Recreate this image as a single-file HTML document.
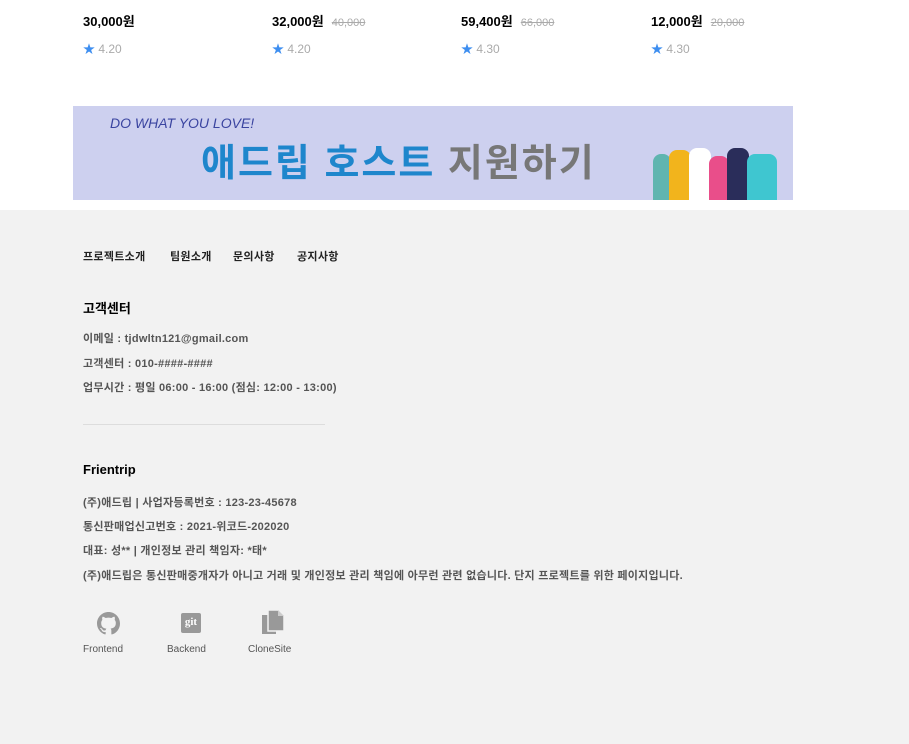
<!DOCTYPE html>
<html><head><meta charset="utf-8"><style>
*{margin:0;padding:0;box-sizing:border-box}
body{width:909px;height:744px;background:#f2f2f2;font-family:"Liberation Sans","Noto Sans CJK KR",sans-serif;position:relative;overflow:hidden}
.top{position:absolute;left:0;top:0;width:909px;height:210px;background:#fff}
.abs{position:absolute;white-space:nowrap}
.price{font-size:13px;font-weight:bold;color:#000}
.old{font-size:11px;color:#aaa;text-decoration:line-through;font-weight:normal;margin-left:8px}
.rate{font-size:12px;color:#aaa}
.star{color:#3d8ef0;font-size:12px}
.banner{position:absolute;left:73px;top:106px;width:720px;height:94px;background:#cdd0ef;overflow:hidden}
.f{font-size:11px;color:#555;font-weight:bold;letter-spacing:0.25px}
.h{font-size:13px;font-weight:bold;color:#000}
.nav{font-size:11px;color:#222;font-weight:bold;letter-spacing:0.3px}
.lbl{font-size:10px;color:#555}
</style></head><body>
<div class="top"></div>
<div class="abs price" style="left:83px;top:11px">30,000원</div>
<div class="abs price" style="left:272px;top:11px">32,000원<span class="old">40,000</span></div>
<div class="abs price" style="left:461px;top:11px">59,400원<span class="old">66,000</span></div>
<div class="abs price" style="left:651px;top:11px">12,000원<span class="old">20,000</span></div>
<div class="abs rate" style="left:83px;top:40px"><span class="star">★</span> 4.20</div>
<div class="abs rate" style="left:272px;top:40px"><span class="star">★</span> 4.20</div>
<div class="abs rate" style="left:461px;top:40px"><span class="star">★</span> 4.30</div>
<div class="abs rate" style="left:651px;top:40px"><span class="star">★</span> 4.30</div>
<div class="banner">
<div class="abs" style="left:37px;top:9px;font-size:14px;font-style:italic;color:#3a44a0">DO WHAT YOU LOVE!</div>
<div class="abs" style="left:128px;top:26px;font-size:38px;font-weight:bold;color:#1e86cc;letter-spacing:2px">애드립 호스트 <span style="color:#777">지원하기</span></div>
<div class="abs" style="left:572px;top:38px;width:140px;height:56px">
<div class="abs" style="left:8px;top:10px;width:18px;height:46px;background:#5fb5b0;border-radius:8px 8px 0 0"></div>
<div class="abs" style="left:24px;top:6px;width:22px;height:50px;background:#f2b41c;border-radius:8px 8px 0 0"></div>
<div class="abs" style="left:44px;top:4px;width:22px;height:52px;background:#fff;border-radius:8px 8px 0 0"></div>
<div class="abs" style="left:64px;top:12px;width:20px;height:44px;background:#e94e8a;border-radius:8px 8px 0 0"></div>
<div class="abs" style="left:82px;top:4px;width:22px;height:52px;background:#2a2d5a;border-radius:8px 8px 0 0"></div>
<div class="abs" style="left:102px;top:10px;width:30px;height:46px;background:#3fc6d0;border-radius:8px 8px 0 0"></div>
</div>
</div>
<div class="abs nav" style="left:83px;top:248px">프로젝트소개</div>
<div class="abs nav" style="left:170px;top:248px">팀원소개</div>
<div class="abs nav" style="left:233px;top:248px">문의사항</div>
<div class="abs nav" style="left:297px;top:248px">공지사항</div>
<div class="abs h" style="left:83px;top:298px">고객센터</div>
<div class="abs f" style="left:83px;top:330px">이메일 : tjdwltn121@gmail.com</div>
<div class="abs f" style="left:83px;top:355px">고객센터 : 010-####-####</div>
<div class="abs f" style="left:83px;top:379px">업무시간 : 평일 06:00 - 16:00 (점심: 12:00 - 13:00)</div>
<div class="abs" style="left:83px;top:424px;width:242px;height:1px;background:#ddd"></div>
<div class="abs h" style="left:83px;top:462px">Frientrip</div>
<div class="abs f" style="left:83px;top:494px">(주)애드립 | 사업자등록번호 : 123-23-45678</div>
<div class="abs f" style="left:83px;top:518px">통신판매업신고번호 : 2021-위코드-202020</div>
<div class="abs f" style="left:83px;top:542px">대표: 성** | 개인정보 관리 책임자: *태*</div>
<div class="abs f" style="left:83px;top:567px">(주)애드립은 통신판매중개자가 아니고 거래 및 개인정보 관리 책임에 아무런 관련 없습니다. 단지 프로젝트를 위한 페이지입니다.</div>
<svg class="abs" style="left:97px;top:612px" width="23" height="23" viewBox="0 0 16 16"><path fill="#999" d="M8 0C3.58 0 0 3.58 0 8c0 3.540 2.29 6.53 5.47 7.59.4.07.55-.17.55-.38v-1.33c-2.230.48-2.7-1.070-2.7-1.070-.36-.92-.89-1.17-.89-1.17-.73-.5.06-.49.06-.49.8.06 1.23.83 1.23.83.71 1.22 1.87.87 2.33.66.07-.52.28-.87.51-1.070-1.78-.2-3.64-.89-3.640-3.95 0-.87.31-1.59.82-2.15-.08-.2-.36-1.02.08-2.12 0 0 .67-.21 2.2.82A7.6 7.6 0 0 1 8 3.87c.68 0 1.36.09 2 .27 1.53-1.04 2.2-.82 2.2-.82.44 1.1.16 1.92.08 2.12.51.56.82 1.27.82 2.15 0 3.07-1.87 3.75-3.65 3.95.29.25.54.73.54 1.48v2.2c0 .21.15.46.55.38A8 8 0 0 0 16 8c0-4.42-3.58-8-8-8z"/></svg>
<div class="abs" style="left:181px;top:613px;width:20px;height:20px;background:#999;border-radius:2px;color:#fff;font-size:11px;font-weight:bold;text-align:center;line-height:19px;font-family:'Liberation Serif',serif">git</div>
<svg class="abs" style="left:262px;top:610px" width="22" height="24" viewBox="0 0 22 24"><rect x="0" y="5" width="14" height="19" fill="#999"/><path d="M6 0h10l6 6v15H6z" fill="#999" stroke="#f2f2f2" stroke-width="1.5"/><path d="M16 0v6h6" fill="#ccc"/></svg>
<div class="abs lbl" style="left:83px;top:644px">Frontend</div>
<div class="abs lbl" style="left:167px;top:644px">Backend</div>
<div class="abs lbl" style="left:248px;top:644px">CloneSite</div>
</body></html>
